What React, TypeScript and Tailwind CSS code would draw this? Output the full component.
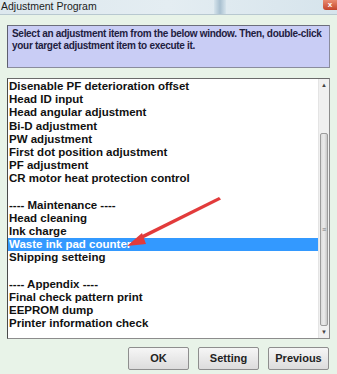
import React from "react";

const items: { label: string; selected?: boolean }[] = [
  { label: "Disenable PF deterioration offset" },
  { label: "Head ID input" },
  { label: "Head angular adjustment" },
  { label: "Bi-D adjustment" },
  { label: "PW adjustment" },
  { label: "First dot position adjustment" },
  { label: "PF adjustment" },
  { label: "CR motor heat protection control" },
  { label: "" },
  { label: "---- Maintenance ----" },
  { label: "Head cleaning" },
  { label: "Ink charge" },
  { label: "Waste ink pad counter", selected: true },
  { label: "Shipping setteing" },
  { label: "" },
  { label: "---- Appendix ----" },
  { label: "Final check pattern print" },
  { label: "EEPROM dump" },
  { label: "Printer information check" },
];

function Btn({ children }: { children: React.ReactNode }) {
  return (
    <button className="w-[61px] h-[23px] bg-gradient-to-b from-[#f6f6f6] to-[#dcdcdc] border border-[#8e8e8e] rounded-[2px] text-[11px] font-bold text-[#222] leading-none">
      {children}
    </button>
  );
}

export default function App() {
  return (
    <div className="relative w-[337px] h-[374px] overflow-hidden bg-[#e8f3e8] font-['Liberation_Sans',Arial,sans-serif]">
      {/* title bar */}
      <div className="relative h-[15px] bg-gradient-to-r from-[#dde8ee] via-[#e4edf2] to-[#d6e4ec] border-b border-[#b8c8d0] flex items-center">
        <span className="text-[10.5px] text-[#1c1c1c] leading-none pl-[1px] -mt-[1px]">
          Adjustment Program
        </span>
        <div className="absolute left-[214px] top-0 w-[12px] h-[14px] bg-gradient-to-r from-[#d6e4ec] via-[#a9c0d0] to-[#d6e4ec]" />
        <div className="absolute right-0 top-0 w-[14px] h-[10px] bg-gradient-to-b from-[#e98a70] to-[#c4432a] rounded-bl-[3px] flex items-center justify-center">
          <span className="text-[8px] text-white font-bold leading-none">x</span>
        </div>
      </div>

      <div className="px-[7px] pt-[10px]">
        {/* info box */}
        <div className="h-[43px] bg-[#c9cdf5] border border-[#8a8c9c] border-l-[#5d5f6e] border-t-[#6c6e7c] pl-[4px] pr-[2px] pt-[2px] overflow-hidden">
          <p className="text-[10px] font-bold text-[#1e2040] leading-[12px] tracking-[-0.3px] whitespace-nowrap">
            Select an adjustment item from the below window. Then, double-click
            <br />
            your target adjustment item to execute it.
          </p>
        </div>

        {/* list */}
        <div className="mt-[10px] h-[261px] bg-white border border-[#8c8c8c] border-l-[#4a4a4a] border-t-[#6a6a6a] flex">
          <div className="flex-1 pt-[1px]">
            {items.map((it, i) => (
              <div
                key={i}
                className={
                  it.selected
                    ? "h-[13.2px] bg-[#3399ff] text-white text-[11.5px] font-bold leading-[13.2px] pl-[1px] whitespace-nowrap"
                    : "h-[13.2px] text-[#111] text-[11.5px] font-bold leading-[13.2px] pl-[1px] whitespace-nowrap"
                }
              >
                {it.label}
              </div>
            ))}
          </div>
          {/* scrollbar */}
          <div className="w-[11px] bg-[#f0f0f0] flex flex-col border-l border-[#e4e4e4]">
            <div className="h-[12px] flex items-center justify-center text-[6px] text-[#444]">▲</div>
            <div className="flex-1 flex flex-col">
              <div className="h-[42px]" />
              <div className="flex-1 mx-[1px] bg-gradient-to-r from-[#dcdcdc] via-[#ececec] to-[#c8c8c8] border border-[#9c9c9c] rounded-[2px] flex items-center justify-center">
                <span className="text-[7px] text-[#777] leading-none">≡</span>
              </div>
            </div>
            <div className="h-[12px] flex items-center justify-center text-[6px] text-[#444]">▼</div>
          </div>
        </div>

        {/* buttons */}
        <div className="mt-[8px] flex justify-end gap-[9px] pr-[1px]">
          <Btn>OK</Btn>
          <Btn>Setting</Btn>
          <Btn>Previous</Btn>
        </div>
      </div>

      {/* red arrow */}
      <svg className="absolute left-0 top-0 pointer-events-none" width="337" height="374">
        <polygon points="219,197 221,199.5 140,240 138,237" fill="#e23b3b" />
        <polygon points="127,246 142,233 146,244" fill="#e23b3b" />
      </svg>
    </div>
  );
}
